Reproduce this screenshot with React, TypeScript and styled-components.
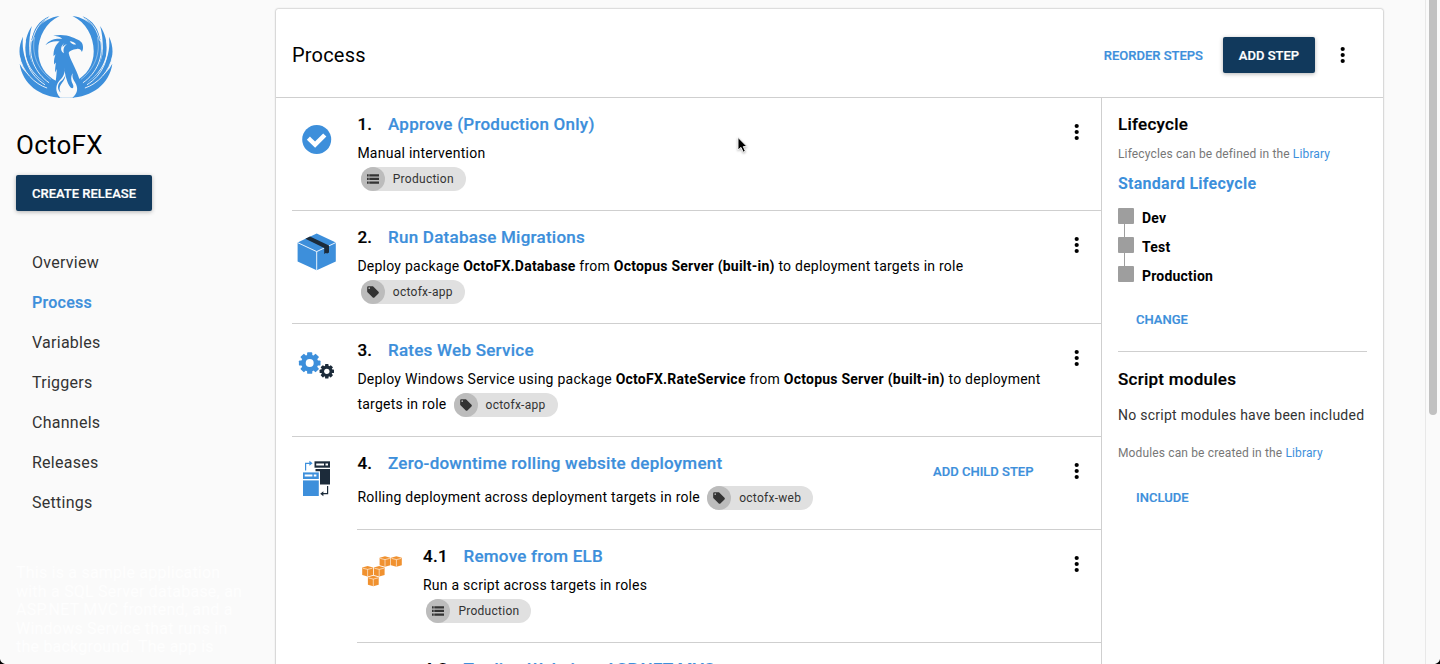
import React from 'react';
import styled, { createGlobalStyle, css } from 'styled-components';

const blue = '#3d8fdb';
const navy = '#11395c';
const line = '#cfcfcf';

const GlobalStyle = createGlobalStyle`
  *, *::before, *::after { box-sizing: border-box; }
  body {
    margin: 0;
    background: #fafafa;
    color: #000;
    font-family: Roboto, 'Liberation Sans', sans-serif;
    font-size: 14px;
    overflow: hidden;
  }
  h1, h2, h3, p { margin: 0; }
`;

const Page = styled.div`
  position: relative;
  display: flex;
  height: 664px;
  overflow: hidden;
`;

/* ---------- sidebar ---------- */

const Sidebar = styled.aside`
  flex: 0 0 276px;
  padding: 15px 16px 0;
`;

const Logo = styled.svg`
  display: block;
  width: 94px;
  height: 83px;
  margin-left: 3px;
`;

const ProjectName = styled.h1`
  margin: 31px 0 14px;
  font-size: 26px;
  font-weight: 400;
  line-height: 32px;
  letter-spacing: 0.25px;
`;

const medium = css`
  font-weight: 500;
  -webkit-text-stroke: 0.2px currentColor;
`;

const SolidButton = styled.button<{ $width: number }>`
  display: block;
  width: ${(p) => p.$width}px;
  height: 36px;
  padding: 1px 0 0;
  border: 0;
  border-radius: 2px;
  background: ${navy};
  color: #fff;
  font-family: inherit;
  font-size: 13px;
  line-height: 35px;
  ${medium}
  box-shadow: 0 1px 4px rgba(0, 0, 0, 0.3);
`;

const Nav = styled.nav`
  display: flex;
  flex-direction: column;
  margin: 32px 0 0 16px;
`;

const NavItem = styled.a<{ $active?: boolean }>`
  font-size: 16px;
  line-height: 40px;
  letter-spacing: 0.26px;
  color: ${(p) => (p.$active ? blue : '#333')};
  ${(p) => p.$active && medium}
`;

const Description = styled.p`
  margin-top: 41px;
  width: 231px;
  color: #fefefe;
  font-size: 16px;
  line-height: 18.6px;
  letter-spacing: 0.22px;
`;

/* ---------- main card ---------- */

const Card = styled.main`
  display: flex;
  flex-direction: column;
  width: 1107px;
  height: 680px;
  margin-top: 9px;
  border-radius: 2px 2px 0 0;
  background: #fff;
  box-shadow: 0 0 2px rgba(0, 0, 0, 0.42), 0 1px 2px rgba(0, 0, 0, 0.1);
`;

const CardHeader = styled.header`
  display: flex;
  align-items: center;
  height: 89px;
  padding: 4px 28px 0 16px;
  border-bottom: 1px solid ${line};
  flex: none;
`;

const Title = styled.h2`
  flex: 1;
  font-size: 20px;
  font-weight: 400;
  line-height: 28px;
  letter-spacing: 0.2px;
`;

const FlatButton = styled.a`
  padding-top: 1px;
  color: ${blue};
  font-size: 13px;
  line-height: 36px;
  white-space: nowrap;
  ${medium}
`;

const HeaderActions = styled.div`
  display: flex;
  align-items: center;
  gap: 20px;
  margin-right: 16px;
`;

const CardBody = styled.div`
  display: flex;
  flex: 1;
`;

const Steps = styled.section`
  flex: none;
  width: 825px;
  padding-left: 16px;
`;

const StepRow = styled.article<{ $height: number; $child?: boolean }>`
  display: flex;
  height: ${(p) => p.$height}px;
  margin-left: ${(p) => (p.$child ? 65 : 0)}px;
  padding-right: 12.5px;
  border-bottom: 1px solid ${line};
`;

const ParentRow = styled(StepRow)`
  height: ${(p) => p.$height - 1}px;
  border-bottom: 0;
`;

const ChildSteps = styled.div`
  &::before {
    content: '';
    display: block;
    margin-left: 65px;
    border-top: 1px solid ${line};
  }
`;

const StepIcon = styled.div<{ $child?: boolean }>`
  display: flex;
  flex: 0 0 ${(p) => (p.$child ? 66 : 65.4)}px;
  padding-top: 17px;
  svg { display: block; width: 50px; height: 50px; }
`;

const StepContent = styled.div`
  flex: 1;
  min-width: 0;
  padding-top: 14px;
`;

const heading = css`
  font-size: 17px;
  line-height: 24px;
  letter-spacing: 0.25px;
  ${medium}
`;

const StepHeading = styled.h3`
  display: flex;
  ${heading}
`;

const StepNumber = styled.span<{ $child?: boolean }>`
  width: ${(p) => (p.$child ? 40.5 : 30.6)}px;
  flex: none;
`;

const StepLink = styled.a`
  color: ${blue};
  white-space: nowrap;
`;

const StepText = styled.div<{ $top: number }>`
  margin-top: ${(p) => p.$top}px;
  line-height: 25px;
  letter-spacing: 0.245px;
  b { font-weight: 700; letter-spacing: 0.23px; }
`;

const Chip = styled.span`
  display: inline-flex;
  align-items: center;
  vertical-align: middle;
  height: 24px;
  margin: 0 4px 0 3.4px;
  padding-right: 12px;
  border-radius: 12px;
  background: #e0e0e0;
  color: #333;
  font-size: 12px;
  line-height: 24px;
  letter-spacing: 0.27px;
`;

const ChipBadge = styled.span`
  display: flex;
  align-items: center;
  justify-content: center;
  width: 24px;
  height: 24px;
  margin-right: 8px;
  border-radius: 50%;
  background: #bcbcbc;
`;

const RowActions = styled.div`
  display: flex;
  align-items: flex-start;
  padding-top: 16px;
  gap: 31px;
`;

const KebabIcon = styled.svg`
  display: block;
  width: 24px;
  height: 36px;
`;

/* ---------- right panel ---------- */

const Panel = styled.section`
  width: 282px;
  padding: 14px 16px 0 16px;
  border-left: 1px solid ${line};
`;

const PanelHeading = styled.h3`
  ${heading}
`;

const Hint = styled.p<{ $top: number }>`
  margin-top: ${(p) => p.$top}px;
  color: #777;
  font-size: 12px;
  line-height: 18px;
  letter-spacing: 0.14px;
  a { color: ${blue}; }
`;

const LifecycleLink = styled.a`
  display: block;
  margin-top: 9px;
  color: ${blue};
  font-size: 16px;
  font-weight: 700;
  line-height: 24px;
  letter-spacing: 0.26px;
`;

const Phases = styled.div`
  display: flex;
  flex-direction: column;
  margin-top: 12px;
`;

const Phase = styled.div`
  display: flex;
  height: 29px;
`;

const PhaseMarker = styled.span<{ $last?: boolean }>`
  display: flex;
  flex-direction: column;
  width: 16px;
  margin-right: 8px;
  &::before {
    content: '';
    height: 16px;
    border-radius: 1px;
    background: #9e9e9e;
  }
  &::after {
    content: '';
    width: 1px;
    height: ${(p) => (p.$last ? 0 : 13)}px;
    margin-left: 6px;
    background: #9e9e9e;
  }
`;

const PhaseName = styled.span`
  padding-top: 1px;
  font-weight: 700;
  line-height: 18px;
  letter-spacing: 0.2px;
`;

const PanelAction = styled.div<{ $top: number }>`
  display: flex;
  margin-top: ${(p) => p.$top}px;
  padding-left: 18px;
`;

const Divider = styled.hr`
  margin: 13px 0 15px;
  border: 0;
  border-top: 1px solid ${line};
`;

const PanelText = styled.p`
  margin-top: 14px;
  color: #333;
  line-height: 20px;
  letter-spacing: 0.26px;
  white-space: nowrap;
`;

/* ---------- window chrome over the page ---------- */

const ScrollTrack = styled.div`
  position: absolute;
  top: 0;
  right: 0;
  width: 15px;
  height: 100%;
  border-left: 1px solid #e8e8e8;
  background: #fafafa;
`;

const ScrollThumb = styled.div`
  width: 8px;
  height: 415px;
  margin-left: 3px;
  border-radius: 0 0 4px 4px;
  background: #c1c1c1;
`;

const Cursor = styled.svg`
  position: absolute;
  left: 735px;
  top: 135px;
  width: 14px;
  height: 20px;
  filter: drop-shadow(0 1px 1px rgba(0, 0, 0, 0.3));
`;

const Corner = styled.svg<{ $right?: boolean }>`
  position: absolute;
  bottom: 0;
  ${(p) => (p.$right ? 'right: 0; transform: scaleX(-1);' : 'left: 0;')}
  width: 5px;
  height: 5px;
`;

/* ---------- drawings ---------- */

const Wing = () => (
  <g>
    <path d="M150 20C98 26 62 72 62 122C62 178 104 222 146 246L142 214C108 198 87 165 87 125C87 82 110 38 150 20Z" />
    <path d="M120 21C90 32 70 62 67 98C80 68 90 50 120 21Z" />
    <path d="M68 50C40 92 40 150 78 192C98 214 120 228 140 236L140 228C90 200 60 165 60 118C60 92 62 72 68 50Z" />
    <path d="M42 82C16 132 40 196 92 224C112 236 130 240 146 242L136 232C70 206 34 150 42 82Z" />
    <path d="M32 162C40 222 92 262 157 263L146 232C96 226 52 202 32 162Z" />
    <g fill="none" stroke="#fafafa" strokeLinecap="round">
      <path d="M67 92C56 140 78 190 118 218" strokeWidth="2.6" />
      <path d="M76 84C66 130 84 178 124 208" strokeWidth="1.2" />
      <path d="M49 94C40 150 62 196 106 224" strokeWidth="2.6" />
      <path d="M31 138C40 186 76 222 112 234" strokeWidth="2.6" />
      <path d="M112 28C88 42 76 66 70 92" strokeWidth="2.4" />
    </g>
  </g>
);

const PhoenixLogo = () => (
  <Logo viewBox="30 17 278 247" preserveAspectRatio="none" fill={blue}>
    <Wing />
    <g transform="translate(338 0) scale(-1 1)">
      <Wing />
    </g>
    <path d="M131 79C148 74 172 76 187 83C204 90 218 94 219 109C220 116 219 121 216 127C213 119 208 117 201 118C188 119 179 124 177 130C180 148 200 178 208 206C213 222 220 232 226 244L190 263L146 263L134 240C140 215 141 190 142 178L137 188C136 178 138 168 139 158L134 164C132 150 136 142 138 134L132 140C132 118 138 106 150 96C134 93 120 98 108 107C118 91 138 86 158 88C150 81 140 80 131 79Z" />
    <path
      d="M163 173C168 190 160 202 150 212C140 222 134 244 152 263L188 263C202 252 207 236 196 218C190 208 186 200 189 190C182 200 184 212 189 222C194 234 188 238 182 232C172 220 166 192 163 173Z"
      fill="#fafafa"
    />
    <path d="M167 194C168 208 160 214 154 224C148 234 150 240 153 248C144 240 143 228 150 218C158 210 165 206 167 194Z" />
    <path d="M180 95C188 95 196 99 199 105C192 106 184 102 180 95Z" fill="#fafafa" />
    <path d="M166 99C153 108 150 124 163 131C160 120 162 110 172 104C164 106 160 110 159 114C159 108 161 103 166 99Z" fill="#fafafa" />
  </Logo>
);

const ApproveIcon = () => (
  <svg viewBox="0 0 50 50">
    <circle cx="24.7" cy="24.5" r="14.5" fill={blue} />
    <path d="M17.6 24.8L23 30L31.6 21.4" fill="none" stroke="#fff" strokeWidth="4.8" strokeLinecap="square" transform="translate(24.7 25) scale(0.94) translate(-24.7 -25)" />
  </svg>
);

const PackageIcon = () => (
  <svg viewBox="0 0 50 50">
    <path d="M24.7 5.6L43.8 14.4V33.5L24.7 42.2L5.6 33.5V14.4Z" fill={blue} />
    <path d="M5.6 14.6L24.7 23.6L43.8 14.6M24.7 23.6V42.2" fill="none" stroke="#fff" strokeWidth="0.9" />
    <path d="M13.4 10.8L18 8.6L37 17.6V24.4L35.2 25.6L33.8 25L32.2 26V20Z" fill="#1c2b3a" />
  </svg>
);

const Gear = ({ x, y, r, fill }: { x: number; y: number; r: number; fill: string }) => (
  <g transform={`translate(${x} ${y}) scale(${r / 10})`} fill={fill}>
    {[0, 45, 90, 135].map((a) => (
      <rect key={a} x="-2.4" y="-10" width="4.8" height="20" rx="0.8" transform={`rotate(${a})`} />
    ))}
    <circle r="7.9" />
    <circle r="3.7" fill="#fff" />
  </g>
);

const GearsIcon = () => (
  <svg viewBox="0 0 50 50">
    <Gear x={17.7} y={22} r={10.8} fill={blue} />
    <Gear x={34.8} y={30.3} r={7.2} fill="#1c2b3a" />
  </svg>
);

const RollingIcon = () => (
  <svg viewBox="0 0 50 50">
    <path d="M22.5 7.3H38V13.7H22.5Z" fill="#1c2b3a" />
    <path d="M24.2 9.5H32V11.4H24.2ZM33.5 9.5H36V11.4H33.5Z" fill="#fff" />
    <path d="M23.5 15H38V30.6H28V17.2H23.5Z" fill="#1c2b3a" />
    <path d="M11 18.4H26.8V25H11Z" fill={blue} />
    <path d="M12.7 20.6H20.4V22.6H12.7ZM21.8 20.6H24.4V22.6H21.8Z" fill="#fff" />
    <path d="M11 26.4H26.8V42H11Z" fill={blue} />
    <path d="M13.6 16.5V9.3H18" fill="none" stroke={blue} strokeWidth="1.2" />
    <path d="M17.4 6.8L20.6 9.3L17.4 11.8Z" fill={blue} />
    <path d="M35.6 32V39.7H31" fill="none" stroke="#1c2b3a" strokeWidth="1.2" />
    <path d="M31.4 37.2L28.2 39.7L31.4 42.2Z" fill="#1c2b3a" />
  </svg>
);

const Cube = ({ x, y }: { x: number; y: number }) => (
  <g transform={`translate(${x} ${y})`}>
    <path d="M5.4 0L10.8 1.6V9L5.4 10.6L0 9V1.6Z" fill="#f0912f" />
    <path d="M0.6 2.2L5.4 3.4L10.2 2.2M5.4 3.4V10.4" fill="none" stroke="#fff" strokeWidth="0.6" />
  </g>
);

const AwsIcon = () => (
  <svg viewBox="0 0 50 50">
    <Cube x={22.6} y={9.2} />
    <Cube x={34} y={9.2} />
    <Cube x={5.2} y={19} />
    <Cube x={16.8} y={19} />
    <Cube x={10.9} y={28.7} />
  </svg>
);

const Kebab = () => (
  <KebabIcon viewBox="0 0 24 36">
    <circle cx="11.7" cy="12" r="2.1" />
    <circle cx="11.7" cy="18" r="2.1" />
    <circle cx="11.7" cy="24" r="2.1" />
  </KebabIcon>
);

const EnvironmentChip = ({ label }: { label: string }) => (
  <Chip>
    <ChipBadge>
      <svg width="14" height="14" viewBox="0 0 14 14" fill="#333">
        <path d="M1 2.2h1.7v2.3H1zM3.3 2.2H13v2.3H3.3zM1 5.8h1.7v2.3H1zM3.3 5.8H13v2.3H3.3zM1 9.4h1.7v2.3H1zM3.3 9.4H13v2.3H3.3z" />
      </svg>
    </ChipBadge>
    {label}
  </Chip>
);

const RoleChip = ({ label }: { label: string }) => (
  <Chip>
    <ChipBadge>
      <svg width="14" height="14" viewBox="0 0 24 24" fill="#333">
        <path d="M21.41 11.58l-9-9C12.05 2.22 11.55 2 11 2H4c-1.1 0-2 .9-2 2v7c0 .55.22 1.05.59 1.42l9 9c.36.36.86.58 1.41.58.55 0 1.05-.22 1.41-.59l7-7c.37-.36.59-.86.59-1.41 0-.55-.23-1.06-.59-1.42zM5.5 7C4.67 7 4 6.33 4 5.5S4.67 4 5.5 4 7 4.67 7 5.5 6.33 7 5.5 7z" />
      </svg>
    </ChipBadge>
    {label}
  </Chip>
);

interface StepProps {
  number: string;
  name: string;
  icon?: React.ReactNode;
  height?: number;
  textTop?: number;
  child?: boolean;
  parent?: boolean;
  action?: string;
  children?: React.ReactNode;
}

const Step = ({ number, name, icon, height = 113, textTop = 5, child, parent, action, children }: StepProps) => {
  const Row = parent ? ParentRow : StepRow;
  return (
    <Row $height={height} $child={child}>
      <StepIcon $child={child}>{icon}</StepIcon>
      <StepContent>
        <StepHeading>
          <StepNumber $child={child}>{number}</StepNumber>
          <StepLink>{name}</StepLink>
        </StepHeading>
        <StepText $top={textTop}>{children}</StepText>
      </StepContent>
      <RowActions>
        {action && <FlatButton>{action}</FlatButton>}
        <Kebab />
      </RowActions>
    </Row>
  );
};

const navItems = ['Overview', 'Process', 'Variables', 'Triggers', 'Channels', 'Releases', 'Settings'];
const phases = ['Dev', 'Test', 'Production'];

export default function App() {
  return (
    <Page>
      <GlobalStyle />
      <Sidebar>
        <PhoenixLogo />
        <ProjectName>OctoFX</ProjectName>
        <SolidButton $width={136}>CREATE RELEASE</SolidButton>
        <Nav>
          {navItems.map((item) => (
            <NavItem key={item} $active={item === 'Process'}>
              {item}
            </NavItem>
          ))}
        </Nav>
        <Description>
          This is a sample application with a SQL Server database, an ASP.NET MVC frontend, and a Windows Service
          that runs in the background. The app is
        </Description>
      </Sidebar>

      <Card>
        <CardHeader>
          <Title>Process</Title>
          <HeaderActions>
            <FlatButton>REORDER STEPS</FlatButton>
            <SolidButton $width={92}>ADD STEP</SolidButton>
          </HeaderActions>
          <Kebab />
        </CardHeader>
        <CardBody>
          <Steps>
            <Step number="1." name="Approve (Production Only)" icon={<ApproveIcon />}>
              Manual intervention
              <br />
              <EnvironmentChip label="Production" />
            </Step>
            <Step number="2." name="Run Database Migrations" icon={<PackageIcon />}>
              Deploy package <b>OctoFX.Database</b> from <b>Octopus Server (built-in)</b> to deployment targets in role
              <br />
              <RoleChip label="octofx-app" />
            </Step>
            <Step number="3." name="Rates Web Service" icon={<GearsIcon />}>
              Deploy Windows Service using package <b>OctoFX.RateService</b> from <b>Octopus Server (built-in)</b> to
              deployment targets in role <RoleChip label="octofx-app" />
            </Step>
            <Step
              number="4."
              name="Zero-downtime rolling website deployment"
              icon={<RollingIcon />}
              height={93}
              textTop={10}
              action="ADD CHILD STEP"
              parent
            >
              Rolling deployment across deployment targets in role <RoleChip label="octofx-web" />
            </Step>
            <ChildSteps>
              <Step number="4.1" name="Remove from ELB" icon={<AwsIcon />} child>
                Run a script across targets in roles
                <br />
                <EnvironmentChip label="Production" />
              </Step>
              <Step number="4.2" name="Trading Website - ASP.NET MVC" child />
            </ChildSteps>
          </Steps>
          <Panel>
            <PanelHeading>Lifecycle</PanelHeading>
            <Hint $top={9}>
              Lifecycles can be defined in the <a>Library</a>
            </Hint>
            <LifecycleLink>Standard Lifecycle</LifecycleLink>
            <Phases>
              {phases.map((phase, i) => (
                <Phase key={phase}>
                  <PhaseMarker $last={i === phases.length - 1} />
                  <PhaseName>{phase}</PhaseName>
                </Phase>
              ))}
            </Phases>
            <PanelAction $top={6}>
              <FlatButton>CHANGE</FlatButton>
            </PanelAction>
            <Divider />
            <PanelHeading>Script modules</PanelHeading>
            <PanelText>No script modules have been included</PanelText>
            <Hint $top={19}>
              Modules can be created in the <a>Library</a>
            </Hint>
            <PanelAction $top={17}>
              <FlatButton>INCLUDE</FlatButton>
            </PanelAction>
          </Panel>
        </CardBody>
      </Card>

      <ScrollTrack>
        <ScrollThumb />
      </ScrollTrack>
      <Cursor viewBox="0 0 14 20">
        <path d="M3 2.4V15L6 12.4L8.2 17.2L10.4 16.2L8.3 11.6H12Z" fill="#000" stroke="#fff" strokeWidth="0.9" />
      </Cursor>
      <Corner viewBox="0 0 5 5">
        <path d="M0 0C0.6 2.8 2.2 4.4 5 5H0Z" />
      </Corner>
      <Corner $right viewBox="0 0 5 5">
        <path d="M0 0C0.6 2.8 2.2 4.4 5 5H0Z" />
      </Corner>
    </Page>
  );
}
